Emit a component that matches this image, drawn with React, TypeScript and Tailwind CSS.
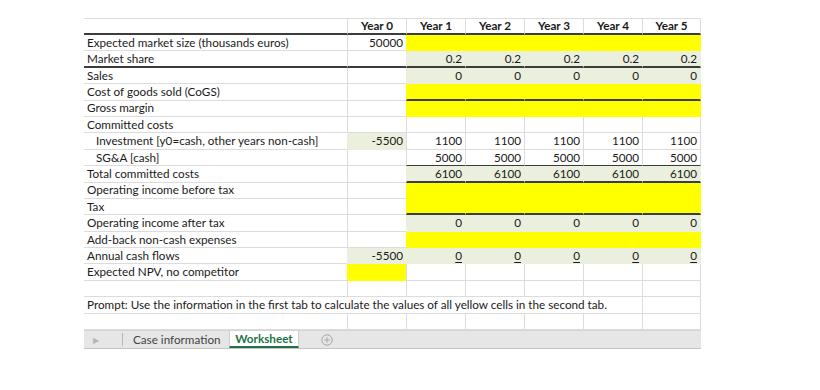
import React from "react";

type Fill = "y" | "g" | undefined;

interface Cell {
  v?: string;
  bg?: Fill;
  u?: boolean;
}

interface Row {
  label: string;
  indent?: boolean;
  y0?: Cell;
  yrs?: Cell;
  // dark rule under the row: whole row, or only the year 1-5 cells
  rule?: "full" | "years";
  ruleW?: 1 | 2;
}

const rows: Row[] = [
  { label: "Expected market size (thousands euros)", y0: { v: "50000" }, yrs: { bg: "y" } },
  { label: "Market share", yrs: { v: "0.2", bg: "g" }, rule: "full", ruleW: 2 },
  { label: "Sales", yrs: { v: "0", bg: "g" } },
  { label: "Cost of goods sold (CoGS)", yrs: { bg: "y" }, rule: "years", ruleW: 2 },
  { label: "Gross margin", yrs: { bg: "y" } },
  { label: "Committed costs" },
  { label: "Investment [y0=cash, other years non-cash]", indent: true, y0: { v: "-5500", bg: "g" }, yrs: { v: "1100" } },
  { label: "SG&A  [cash]", indent: true, yrs: { v: "5000" }, rule: "years", ruleW: 1 },
  { label: "Total committed costs", yrs: { v: "6100", bg: "g" }, rule: "years", ruleW: 2 },
  { label: "Operating income before tax", yrs: { bg: "y" } },
  { label: "Tax", yrs: { bg: "y" }, rule: "years", ruleW: 2 },
  { label: "Operating income after tax", yrs: { v: "0", bg: "g" } },
  { label: "Add-back non-cash expenses", yrs: { bg: "y" } },
  { label: "Annual cash flows", y0: { v: "-5500", bg: "g" }, yrs: { v: "0", bg: "g", u: true } },
  { label: "Expected NPV, no competitor", y0: { bg: "y" } },
  { label: "" },
];

const fillBg = (f: Fill) => (f === "y" ? "bg-[#ffff00]" : f === "g" ? "bg-[#ebf0de]" : "bg-white");
const fillLine = (f: Fill) =>
  f === "y" ? "border-[#ffff00]" : f === "g" ? "border-[#ebf0de]" : "border-[#dcdcdc]";

function YearCell({ c, dark, darkW, last }: { c: Cell; dark?: boolean; darkW?: 1 | 2; last?: boolean }) {
  const bottom = dark
    ? darkW === 2
      ? "border-b-2 border-b-[#3c3c3c]"
      : "border-b border-b-[#3c3c3c]"
    : "border-b";
  return (
    <div
      className={`h-[16.4px] flex items-center justify-end pr-[3px] border-l ${last ? "border-r" : ""} ${fillBg(c.bg)} ${fillLine(c.bg)} ${bottom}`}
    >
      <span className={c.u ? "underline underline-offset-[1.5px]" : ""}>{c.v}</span>
    </div>
  );
}

function SheetRow({ r }: { r: Row }) {
  const yrs = r.yrs ?? {};
  const fullDark = r.rule === "full";
  const yrsDark = !!r.rule;
  return (
    <>
      <div
        className={`h-[16.4px] flex items-center ${r.indent ? "pl-[12px]" : "pl-[3px]"} whitespace-nowrap border-[#dcdcdc] ${
          fullDark ? "border-b-2 border-b-[#3c3c3c]" : "border-b"
        }`}
      >
        {r.label}
      </div>
      <YearCell c={r.y0 ?? {}} dark={fullDark} darkW={r.ruleW} />
      {[1, 2, 3, 4, 5].map((i) => (
        <YearCell key={i} c={yrs} dark={yrsDark} darkW={r.ruleW} last={i === 5} />
      ))}
    </>
  );
}

export default function App() {
  return (
    <div className="w-[820px] h-[390px] bg-white pt-[18px] pl-[84px] text-[11.7px] text-[#1a1a1a] font-['Lato','Liberation_Sans',sans-serif] overflow-hidden">
      <div className="grid grid-cols-[263px_repeat(6,59px)] w-[617px]">
        {/* header */}
        <div className="h-[17px] border-t border-[#dcdcdc] border-b-2 border-b-[#3c3c3c]" />
        {[0, 1, 2, 3, 4, 5].map((y) => (
          <div
            key={y}
            className={`h-[17px] flex items-center justify-center font-bold border-t border-l ${
              y === 5 ? "border-r" : ""
            } border-[#dcdcdc] border-b-2 border-b-[#3c3c3c]`}
          >
            Year {y}
          </div>
        ))}

        {rows.map((r, i) => (
          <SheetRow key={i} r={r} />
        ))}

        {/* prompt row */}
        <div className="col-span-6 h-[16.4px] flex items-center pl-[3px] whitespace-nowrap border-b border-[#dcdcdc]">
          Prompt: Use the information in the first tab to calculate the values of all yellow cells in the second tab.
        </div>
        <div className="h-[16.4px] border-l border-r border-b border-[#dcdcdc]" />

        {/* empty row */}
        <div className="h-[16.4px] border-b border-[#dcdcdc]" />
        {[0, 1, 2, 3, 4, 5].map((y) => (
          <div key={y} className={`h-[16.4px] border-l border-b ${y === 5 ? "border-r" : ""} border-[#dcdcdc]`} />
        ))}
      </div>

      {/* sheet tabs */}
      <div className="w-[617px] h-[19px] bg-[#e6e6e6] border-t border-[#d4d4d4] border-b border-b-[#c4c4c4] flex items-stretch text-[#444]">
        <div className="w-[39px] flex items-center">
          <span className="ml-[9px] text-[8px] text-[#b5b5b5]">▶</span>
          <span className="ml-auto h-[13px] w-px bg-[#b8b8b8]" />
        </div>
        <div className="w-[106px] flex items-center pl-[10px]">Case information</div>
        <div className="w-[70px] bg-white flex items-center justify-center font-bold text-[#217346] border-b-2 border-[#217346] border-x border-x-[#cfcfcf]">
          Worksheet
        </div>
        <div className="flex items-center pl-[22px]">
          <svg width="12" height="12" viewBox="0 0 12 12" fill="none" stroke="#a8a8a8" strokeWidth="1">
            <circle cx="6" cy="6" r="5.2" />
            <path d="M6 3.2v5.6M3.2 6h5.6" />
          </svg>
        </div>
      </div>
    </div>
  );
}
